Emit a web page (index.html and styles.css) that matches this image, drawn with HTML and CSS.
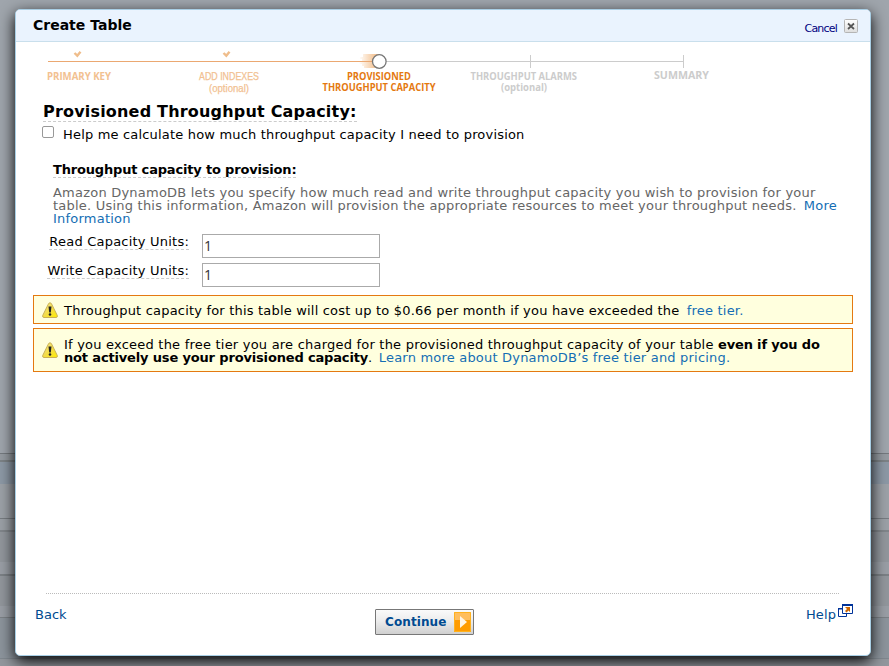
FILE: index.html
```html
<!DOCTYPE html>
<html lang="en">
<head>
<meta charset="utf-8">
<title>Create Table</title>
<link rel="stylesheet" href="styles.css">
</head>
<body>
<main class="dialog">
  <header class="head">
    <h1>Create Table</h1>
    <a class="cancel">Cancel</a>
    <svg class="close" width="14" height="14" viewBox="0 0 14 14"><defs><linearGradient id="cg" x2="0" y2="1"><stop stop-color="#fff"/><stop offset="1" stop-color="#ddd"/></linearGradient></defs><rect x=".5" y=".5" width="13" height="13" rx="1" fill="url(#cg)" stroke="#b5b5b5"/><path d="M4 4.500l6 5.500M10 4.500l-6 5.500" stroke="#555" stroke-width="1.700"/></svg>
  </header>
  <svg class="steps" width="854" height="58" viewBox="16 42 854 58">
    <defs><linearGradient id="trail"><stop stop-color="#f0a050" stop-opacity="0"/><stop offset="1" stop-color="#eda560" stop-opacity=".8"/></linearGradient></defs>
    <path d="M48 61.500H372" stroke="#eba871"/>
    <path d="M386 61.500H683M530.500 55V68M683.500 55V68" stroke="#ccc" fill="none"/>
    <path d="M74.500 53l2.800 2.700 3.200-4" fill="none" stroke="#efbd8b" stroke-width="2.400"/>
    <path d="M223.500 53l2.800 2.700 3.200-4" fill="none" stroke="#efbd8b" stroke-width="2.400"/>
    <path d="M363 54h16v3h-16zM360 57h14v2h-14zM362 59h12v2h-12zM359 62h14v2h-14zM362 64h14v2h-14zM364 66h14v2h-14z" fill="url(#trail)"/>
    <circle cx="379.300" cy="61.500" r="6.800" fill="#fff" stroke="#777" stroke-width="1.300"/>
    <g class="done"><text x="47" y="80" textLength="64" lengthAdjust="spacingAndGlyphs">PRIMARY KEY</text>
    <text x="199" y="80" textLength="60" lengthAdjust="spacingAndGlyphs" class="n">ADD INDEXES</text>
    <text x="209" y="92" textLength="40" lengthAdjust="spacingAndGlyphs" class="n">(optional)</text></g>
    <g class="now"><text x="347" y="80" textLength="64" lengthAdjust="spacingAndGlyphs">PROVISIONED</text>
    <text x="322.500" y="91" textLength="113" lengthAdjust="spacingAndGlyphs">THROUGHPUT CAPACITY</text></g>
    <g class="next"><text x="470.500" y="80" textLength="106.500" lengthAdjust="spacingAndGlyphs">THROUGHPUT ALARMS</text>
    <text x="501" y="91" textLength="46" lengthAdjust="spacingAndGlyphs">(optional)</text>
    <text x="654" y="79" textLength="55" lengthAdjust="spacingAndGlyphs">SUMMARY</text></g>
  </svg>
  <section class="body">
    <h2><span class="dash">Provisioned Throughput Capacity:</span></h2>
    <label class="check"><span class="box"></span><span>Help me calculate how much throughput capacity I need to provision</span></label>
    <h3><span class="dash">Throughput capacity to provision:</span></h3>
    <p class="desc">Amazon DynamoDB lets you specify how much read and write throughput capacity you wish to provision for your<br>table. Using this information, Amazon will provision the appropriate resources to meet your throughput needs. <a class="gap">More<br>Information</a></p>
    <div class="field"><div class="name"><span class="dash">Read Capacity Units:</span></div><div class="input">1</div></div>
    <div class="field"><div class="name"><span class="dash">Write Capacity Units:</span></div><div class="input">1</div></div>
    <div class="note one">
      <svg class="warn" width="16" height="16" viewBox="0 0 16 16"><defs><linearGradient id="wg" x2="1" y2="1"><stop stop-color="#f5e9a0"/><stop offset=".5" stop-color="#f3dc4a"/><stop offset="1" stop-color="#ffee00"/></linearGradient></defs><path d="M8 .8Q9 .8 9.600 2L15.300 13.500Q15.800 15.500 14 15.500H2Q.2 15.500.7 13.500L6.400 2Q7 .8 8 .8z" fill="url(#wg)" stroke="#c9b056"/><path d="M6.500 4.500h3l-.7 6H7.200z" fill="#222"/><circle cx="8" cy="12.500" r="1.300" fill="#222"/></svg>
      <p>Throughput capacity for this table will cost up to $0.66 per month if you have exceeded the <a class="gap">free tier.</a></p>
    </div>
    <div class="note two">
      <svg class="warn" width="16" height="16" viewBox="0 0 16 16"><path d="M8 .8Q9 .8 9.600 2L15.300 13.500Q15.800 15.500 14 15.500H2Q.2 15.500.7 13.500L6.400 2Q7 .8 8 .8z" fill="url(#wg)" stroke="#c9b056"/><path d="M6.500 4.500h3l-.7 6H7.200z" fill="#222"/><circle cx="8" cy="12.500" r="1.300" fill="#222"/></svg>
      <p>If you exceed the free tier you are charged for the provisioned throughput capacity of your table <b>even if you do<br>not actively use your provisioned capacity</b>. <a class="gap">Learn more about DynamoDB’s free tier and pricing.</a></p>
    </div>
  </section>
  <footer class="foot">
    <a class="back">Back</a>
    <div class="continue"><span>Continue</span><svg width="17" height="20" viewBox="0 0 17 20"><path d="M0 0h17v20H0z" fill="#ff9c00"/><path d="M0 0h17v8H0z" fill="#ffbe5e"/><path d="M.5.5h16v19H.5z" fill="none" stroke="#ffb21f"/><path d="M6 4l7 6-7 6z" fill="#fff5e5"/></svg></div>
    <a class="help"><span>Help</span><svg width="15" height="13" viewBox="0 0 15 13"><path d="M.5 4.500h8v8h-8z" fill="#fff" stroke="#039"/><path d="M0 4h9v1.500H0z" fill="#039"/><path d="M4.500.5h10v9h-10z" fill="#fff" stroke="#039"/><path d="M4 0h11v2H4z" fill="#039"/><path d="M7 3h5v5l-1.500-1.500L8.500 8.500 7 7l2-2z" fill="#c60"/></svg></a>
  </footer>
</main>
</body>
</html>
```
FILE: styles.css
```css
* { box-sizing: border-box; }
html, body { height: 100%; }
body {
  margin: 0;
  padding: 9px 18px 10px 15px;
  overflow: hidden;
  font: 13px/13px "DejaVu Sans", sans-serif;
  color: #000;
  background: linear-gradient(#9fa5ac 0 453px, #74797e 453px 454px, #959ba1 454px 460px, #7c8286 460px 462px, #8c98a5 462px 484px, #9ca1a7 484px 518px, #777c81 518px 519px, #9ba0a6 519px 530px, #80858a 530px 532px, #91969c 532px 562px, #999ea5 562px 574px, #7b8085 574px 576px, #91969c 576px 606px, #999ea5 606px 617px, #7b8085 617px 618px, #8c949c 618px 658px, #7f878e 658px 659px, #92979d 659px);
}
h1, h2, h3, p { margin: 0; }
a { color: #146eb4; }
.dialog {
  width: 856px;
  height: 647px;
  display: flex;
  flex-direction: column;
  background: #fff;
  border: 1px solid #a9cfe5;
  border-radius: 5px;
  overflow: hidden;
  box-shadow: 0 5px 15px #000;
}
.head {
  height: 32px;
  flex: none;
  display: flex;
  padding: 0 12px 0 17px;
  background: #eaf3fe;
  border-bottom: 1px solid #c9dfec;
}
h1 { flex: 1; font-size: 14px; line-height: 31px; }
.cancel { font: 11px/37px "DejaVu Sans", sans-serif; letter-spacing: -.8px; color: #000080; margin-right: 7px; }
.close { margin-top: 9px; }
.steps { flex: none; display: block; font: bold 10.500px "Open Sans", sans-serif; }
.steps .n { font-family: "Liberation Sans", sans-serif; font-weight: normal; font-size: 11px; stroke: #f2c191; stroke-width: .25px; }
.done { fill: #f2c191; }
.now { fill: #e47911; }
.next { fill: #ccc; }
.body { flex: none; padding: 0 17px; letter-spacing: .215px; }
.dash { display: inline-block; border-bottom: 1px dashed #ccc; }
h2 { padding: 2px 0 0 10px; font-size: 16px; line-height: 19px; height: 25px; letter-spacing: .19px; }
.check { display: flex; height: 38px; padding: 1px 0 0 9px; letter-spacing: .18px; }
.box { width: 12px; height: 12px; border: 1px solid #999; border-radius: 2px; margin-right: 9px; }
.check span:last-child { padding-top: 2px; }
h3 { height: 23px; padding-left: 20px; font-size: 13px; line-height: 14px; letter-spacing: -.18px; }
b { letter-spacing: -.16px; }
.desc { height: 48px; padding-left: 20px; color: #666; white-space: nowrap; letter-spacing: .22px; }
.gap { margin-left: 3px; }
.field { display: flex; height: 29px; }
.name { width: 156px; text-align: right; }
.name .dash { line-height: 15px; }
.input { width: 178px; height: 24px; margin-left: 13px; border: 1px solid #aaa; padding-left: 1px; font: 14px/21px "Open Sans", sans-serif; color: #333; }
.note { display: flex; align-items: center; border: 1px solid #e47911; background: #ffffde; padding-left: 8px; white-space: nowrap; }
.note p { margin-left: 6px; padding-top: 2px; }
.one { height: 29px; margin: 3px 0 4px; letter-spacing: .19px; }
.two { height: 44px; }
.two a { margin-left: 2px; letter-spacing: .2px; }
.foot {
  position: relative;
  margin: auto 17px 0 19px;
  height: 62px;
  display: grid;
  grid-template-columns: 340px 1fr auto;
  align-items: start;
}
.foot::before { content: ""; position: absolute; top: 0; left: 11px; right: 13px; height: 1px; background: linear-gradient(90deg, #bbb 50%, #fff 50%) 0 0 / 2px 1px; }
.back, .help { margin-top: 15px; color: #004b91; }
.help { display: flex; letter-spacing: .1px; }
.help svg { margin: -4px 0 0 2px; }
.continue {
  width: 99px; height: 26px; margin-top: 16px; padding: 2px 2px 0 9px;
  display: flex; justify-content: space-between;
  border: 1px solid #777; border-radius: 1px;
  background: linear-gradient(#fafafa, #ececec 45%, #d0d0d0);
  color: #004b91; font-weight: bold; line-height: 20px; font-size: 12px; letter-spacing: .1px;
}
```
